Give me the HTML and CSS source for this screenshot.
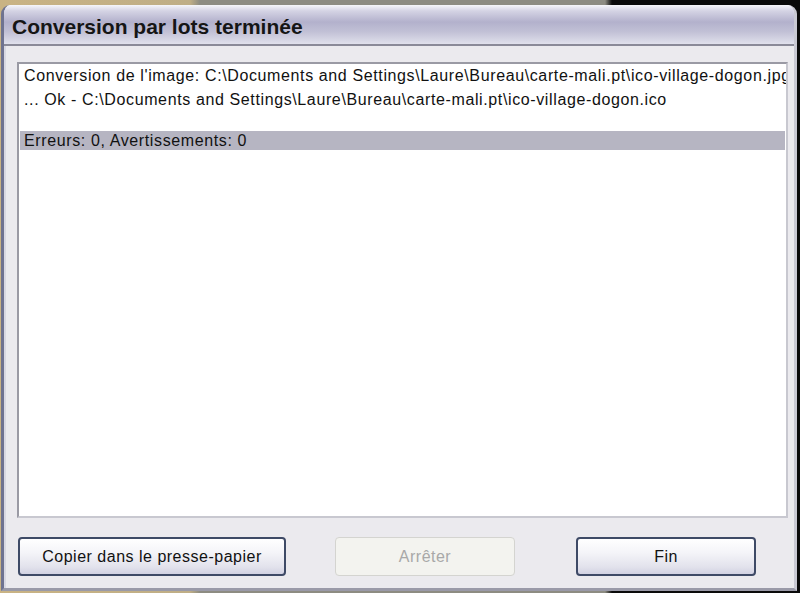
FILE: index.html
```html
<!DOCTYPE html>
<html lang="fr">
<head>
    <meta charset="UTF-8">
    <meta name="viewport" content="width=device-width, initial-scale=1.0">
    <title>Conversion par lots terminée</title>
    <link rel="stylesheet" href="styles.css">
</head>
<body>
    <div class="window">
        <div class="titlebar">
            <h1 class="title">Conversion par lots terminée</h1>
        </div>
        <div class="content">
            <div class="log">
                <div class="log-line">Conversion de l'image: C:\Documents and Settings\Laure\Bureau\carte-mali.pt\ico-village-dogon.jpg</div>
                <div class="log-line">... Ok - C:\Documents and Settings\Laure\Bureau\carte-mali.pt\ico-village-dogon.ico</div>
                <div class="log-line blank"></div>
                <div class="log-line selected">Erreurs: 0, Avertissements: 0</div>
            </div>
            <div class="buttons">
                <button class="btn btn-copy">Copier dans le presse-papier</button>
                <button class="btn btn-stop" disabled>Arrêter</button>
                <button class="btn btn-end">Fin</button>
            </div>
        </div>
    </div>
</body>
</html>
```

FILE: styles.css
```css
html, body {
    margin: 0;
    padding: 0;
    height: 593px;
    overflow: hidden;
}
body {
    font-family: "Liberation Sans", Arial, sans-serif;
    background: linear-gradient(to right, #c9b384 0, #bfae86 190px, #8d8c82 200px, #8d8c82 605px, #0a0a0a 612px, #0a0a0a 100%);
    padding-top: 5px;
    box-sizing: border-box;
}
.window {
    margin: 0 3px 0 1px;
    height: 583px;
    display: flex;
    flex-direction: column;
    border-left: 3px solid #6f7390;
    border-right: 3px solid #c9c9d3;
    border-bottom: 3px solid #9a9aa8;
    border-radius: 9px 9px 0 0;
    overflow: hidden;
    background: #ebeaee;
}
.titlebar {
    height: 41px;
    flex: none;
    box-sizing: border-box;
    padding-top: 9px;
    background: linear-gradient(to bottom, #f6f6fa 0, #d4d3e4 6px, #b3b1cc 17px, #c2c1d6 27px, #dedeea 38px, #e6e6ee 41px);
    border-bottom: 2px solid #8a8a98;
}
.title {
    margin: 0 0 0 8px;
    font-size: 21px;
    line-height: 26px;
    font-weight: bold;
    color: #151515;
}
.content {
    flex: 1;
    display: flex;
    flex-direction: column;
    padding: 16px 6px 0 11px;
    border-left: 2px solid #d8d8e2;
}
.log {
    height: 456px;
    background: #fff;
    border: 2px solid #9a9aa4;
    border-right-color: #c8c8d0;
    border-bottom-color: #c8c8d0;
    box-sizing: border-box;
    font-size: 16px;
    letter-spacing: 0.62px;
    color: #111;
    overflow: hidden;
}
.log-line {
    height: 24px;
    line-height: 24px;
    padding-left: 5px;
    white-space: nowrap;
}
.log-line.blank {
    height: 19px;
}
.log-line.selected {
    height: 19px;
    line-height: 19px;
    margin: 0 1px;
    padding-left: 4px;
    background: #b6b5c2;
}
.buttons {
    display: flex;
    margin-top: 19px;
}
.btn {
    height: 39px;
    font-family: "Liberation Sans", Arial, sans-serif;
    font-size: 16px;
    letter-spacing: 0.5px;
    color: #111;
    border: 2px solid #3e4a66;
    border-radius: 4px;
    background: linear-gradient(to bottom, #ffffff 0, #f4f4f8 40%, #e2e2ec 80%, #d2d2e2 100%);
    padding: 0;
}
.btn-copy {
    width: 268px;
    margin-left: 1px;
}
.btn-stop {
    width: 180px;
    margin-left: 49px;
    border: 1px solid #d4d4d0;
    background: #f3f3ef;
    color: #a8a8a8;
}
.btn-end {
    width: 180px;
    margin-left: 61px;
}
```
